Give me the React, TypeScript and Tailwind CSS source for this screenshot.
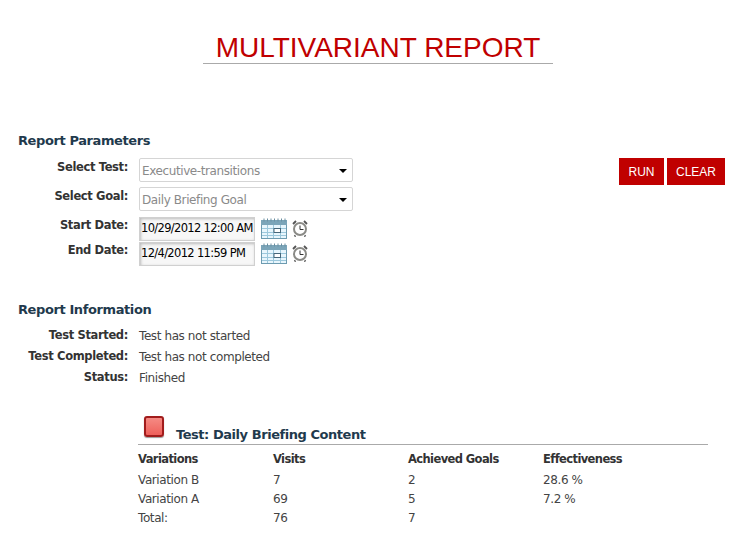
function Calendar() {
  return (
    <svg width="27" height="21" viewBox="0 0 27 21" className="shrink-0">
      <rect x="0.5" y="2.5" width="25" height="18" fill="#e8f6fd" stroke="#6d9bb0" />
      <rect x="0" y="2" width="26" height="5" fill="#7ba5b9" />
      <path d="M3 0.5v3M6.5 0.5v3M10 0.5v3M13.5 0.5v3M17 0.5v3M20.5 0.5v3M24 0.5v3" stroke="#6a8fa1" />
      <path d="M1 10.5h24M1 14.5h24M1 17.5h24M6.5 7v13M12.5 7v13M19.5 7v13" stroke="#9cc8dc" />
      <rect x="13" y="10.5" width="6.5" height="4" fill="#fff" stroke="#47677a" />
    </svg>
  );
}
function Clock() {
  return (
    <svg width="16" height="17" viewBox="0 0 16 17" className="shrink-0 -ml-[2px]">
      <path d="M1 4 L4 1 M15 4 L12 1 M3.5 15.5 L2.5 16.5 M12.5 15.5 L13.5 16.5" stroke="#555" strokeWidth="1.8" />
      <circle cx="8" cy="9" r="6" fill="#fff" stroke="#8a8a86" strokeWidth="2" />
      <path d="M8 5.5V9.5H11.5" fill="none" stroke="#333" strokeWidth="1" />
    </svg>
  );
}
function Select({ value }: { value: string }) {
  return (
    <div className="w-[214px] h-6 flex items-center justify-between bg-white border border-[#d5d5d5] rounded-[2px] pl-[2px] pr-[5px] pt-[1px] text-[#8a8a8a]">
      <span>{value}</span>
      <span className="w-0 h-0 border-x-[4px] border-x-transparent border-t-[4px] border-t-black" />
    </div>
  );
}
function DateInput({ value }: { value: string }) {
  return (
    <div className="flex items-center gap-[6px]">
      <div className="w-[116px] h-6 flex items-center bg-[#f7f7f7] border border-[#d0d0d0] shadow-[inset_1px_1px_3px_#bbb] pl-[1px] text-[11.5px] tracking-[-0.67px] text-black whitespace-nowrap">{value}</div>
      <Calendar />
      <Clock />
    </div>
  );
}
function Label({ children }: { children: string }) {
  return <div className="w-[128px] shrink-0 pt-[1px] text-right font-bold text-[11.5px] tracking-[-0.35px] text-[#333]">{children}</div>;
}
function FormRow({ label, children, h }: { label: string; children: React.ReactNode; h: string }) {
  return (
    <div className={`flex gap-[11px] ${h}`}>
      <Label>{label}</Label>
      {children}
    </div>
  );
}
function InfoRow({ label, value }: { label: string; value: string }) {
  return (
    <div className="flex gap-[11px] h-[21px] items-center">
      <Label>{label}</Label>
      <div className="text-[#444]">{value}</div>
    </div>
  );
}
const rows = [
  ["Variation B", "7", "2", "28.6 %"],
  ["Variation A", "69", "5", "7.2 %"],
  ["Total:", "76", "7", ""],
];
const head = "font-bold text-[11.5px] tracking-[-0.6px] text-[#333]";
export default function App() {
  return (
    <div className="w-[739px] h-[554px] bg-white overflow-hidden text-[12px] font-['DejaVu_Sans',sans-serif] tracking-[-0.4px]">
      <div className="ml-[203px] w-[350px] mt-[31px] border-b border-[#aaa] text-center h-[33px] text-[28px] leading-[33px] tracking-normal font-['Liberation_Sans',sans-serif] text-[#c00000] whitespace-nowrap">
        MULTIVARIANT REPORT
      </div>
      <div className="mt-[68px] ml-[18px] text-[13px] tracking-[-0.4px] leading-[17px] font-bold text-[#1f3a4d]">Report Parameters</div>
      <div className="flex justify-between pr-[14px] mt-[9px]">
        <div className="flex flex-col">
          <FormRow label="Select Test:" h="h-[29px]"><Select value="Executive-transitions" /></FormRow>
          <FormRow label="Select Goal:" h="h-[29px]"><Select value="Daily Briefing Goal" /></FormRow>
          <FormRow label="Start Date:" h="h-[25px]"><DateInput value="10/29/2012 12:00 AM" /></FormRow>
          <FormRow label="End Date:" h="h-[25px]"><DateInput value="12/4/2012 11:59 PM" /></FormRow>
        </div>
        <div className="flex gap-[3px] h-[27px] tracking-normal">
          <div className="w-[45px] bg-[#c00000] text-white flex items-center justify-center font-['Liberation_Sans',sans-serif] text-[12px]">RUN</div>
          <div className="w-[58px] bg-[#c00000] text-white flex items-center justify-center font-['Liberation_Sans',sans-serif] text-[12px]">CLEAR</div>
        </div>
      </div>
      <div className="mt-[35px] ml-[18px] text-[13px] tracking-[-0.4px] leading-[17px] font-bold text-[#1f3a4d]">Report Information</div>
      <div className="mt-[7px] flex flex-col">
        <InfoRow label="Test Started:" value="Test has not started" />
        <InfoRow label="Test Completed:" value="Test has not completed" />
        <InfoRow label="Status:" value="Finished" />
      </div>
      <div className="ml-[138px] w-[570px] mt-[29px]">
        <div className="flex items-end h-[28px] border-b border-[#aaa] pl-[6px] pb-[1px]">
          <div className="w-5 h-[21px] mb-[6px] rounded-[3px] border-2 border-[#a11c1c] bg-gradient-to-b from-[#f58a84] to-[#ee5f5a] shadow-[0_1px_1px_#999]" />
          <div className="ml-3 text-[13px] tracking-[-0.45px] leading-[17px] font-bold text-[#1f3a4d]">Test: Daily Briefing Content</div>
        </div>
        <div className="grid grid-cols-[135px_135px_135px_135px] grid-rows-[21px] mt-[4px] auto-rows-[19px] items-center text-[#444]">
          <div className={head}>Variations</div>
          <div className={head}>Visits</div>
          <div className={head}>Achieved Goals</div>
          <div className={head}>Effectiveness</div>
          {rows.flat().map((c, i) => <div key={i}>{c}</div>)}
        </div>
      </div>
    </div>
  );
}
